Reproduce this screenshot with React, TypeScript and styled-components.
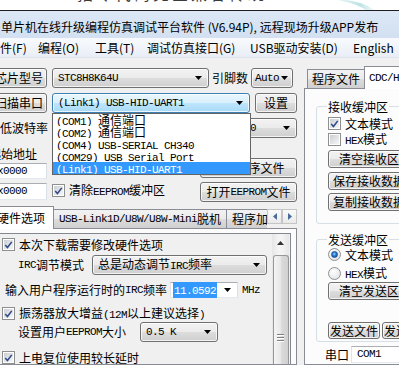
import React from "react";
import styled, { createGlobalStyle, css } from "styled-components";

const CJK = `"Noto Sans CJK SC", "Noto Sans", "Liberation Sans", sans-serif`;
const MONO = `"Liberation Mono", "DejaVu Sans Mono", monospace`;

const GlobalStyle = createGlobalStyle`
  html, body { margin: 0; padding: 0; overflow: hidden; background: #f0f0f0; }
  body { font-family: ${CJK}; font-size: 12px; color: #000; }
  * { box-sizing: border-box; }
`;

const Lat = styled.span`
  font-family: ${MONO};
  font-size: 11px;
  letter-spacing: -0.6px;
  white-space: pre;
`;

function mix(s: string) {
  return s
    .split(/([\x20-\x7e]+)/)
    .filter(Boolean)
    .map((p, i) =>
      /^[\x20-\x7e]+$/.test(p) ? <Lat key={i}>{p}</Lat> : <React.Fragment key={i}>{p}</React.Fragment>
    );
}

const Screen = styled.div`
  width: 399px;
  height: 365px;
  overflow: hidden;
  background: #f0f0f0;
  display: flex;
  flex-direction: column;
`;

const Slogan = styled.div`
  flex: none;
  height: 11px;
  background: #fff;
  border-bottom: 1px solid #1e1e1e;
  overflow: hidden;
  display: flex;
  align-items: flex-start;
`;

const SloganText = styled.div`
  margin-left: 77px;
  margin-top: -15px;
  font-size: 16px;
  line-height: 17px;
  color: #3a3a3a;
  letter-spacing: 3px;
  white-space: nowrap;
`;

const Swoosh = styled.svg`
  flex: none;
  margin-left: 22px;
`;

const TitleBar = styled.div`
  flex: none;
  height: 27px;
  background: linear-gradient(#dce8f6, #d2e0f1);
  display: flex;
  align-items: center;
  padding: 3px 0 0 1px;
  font-size: 12px;
  white-space: nowrap;
`;

const MenuBar = styled.div`
  flex: none;
  height: 20px;
  display: flex;
  align-items: center;
  background: linear-gradient(#f8fafd, #e9eef6);
  border-bottom: 1px solid #dfe4ec;
  white-space: nowrap;
`;

const MenuItem = styled.div<{ $w?: number; $ml?: number }>`
  flex: none;
  width: ${(p) => (p.$w ? `${p.$w}px` : "auto")};
  margin-left: ${(p) => p.$ml ?? 0}px;
  font-size: 12px;
  line-height: 18px;
`;

const Content = styled.div`
  flex: 1;
  min-height: 0;
  display: flex;
  padding-top: 10px;
`;

const LeftCol = styled.div`
  width: 297px;
  flex: none;
  display: flex;
  flex-direction: column;
`;

const RightCol = styled.div`
  flex: 1;
  min-width: 0;
  margin-left: 7px;
  margin-top: -2px;
  display: flex;
  flex-direction: column;
`;

const Row = styled.div<{ $mt?: number; $h?: number; $ml?: number }>`
  flex: none;
  display: flex;
  align-items: center;
  height: ${(p) => p.$h ?? 20}px;
  margin-top: ${(p) => p.$mt ?? 0}px;
  margin-left: ${(p) => p.$ml ?? 0}px;
  white-space: nowrap;
`;

const winBtn = css`
  border: 1px solid #707070;
  border-radius: 3px;
  background: linear-gradient(#f2f2f2 0%, #ebebeb 49%, #dddddd 50%, #cfcfcf 100%);
  box-shadow: inset 0 0 0 1px rgba(255, 255, 255, 0.75);
`;

const Btn = styled.div<{ $w: number; $h?: number; $ml?: number; $mt?: number }>`
  ${winBtn}
  flex: none;
  width: ${(p) => p.$w}px;
  height: ${(p) => p.$h ?? 20}px;
  margin-left: ${(p) => p.$ml ?? 0}px;
  margin-top: ${(p) => p.$mt ?? 0}px;
  display: flex;
  align-items: center;
  justify-content: center;
  white-space: nowrap;
  line-height: 1;
  overflow: hidden;
`;

const Label = styled.div<{ $ml?: number; $mt?: number; $h?: number }>`
  flex: none;
  margin-left: ${(p) => p.$ml ?? 0}px;
  margin-top: ${(p) => p.$mt ?? 0}px;
  height: ${(p) => (p.$h ? `${p.$h}px` : "auto")};
  display: flex;
  align-items: center;
  white-space: nowrap;
  line-height: 1;
`;

const ComboBox = styled.div<{
  $w: number;
  $h?: number;
  $ml?: number;
  $hot?: boolean;
  $flat?: boolean;
  $pr?: number;
  $pl?: number;
}>`
  ${winBtn}
  ${(p) =>
    p.$hot &&
    css`
      border-color: #3c7fb1;
      background: linear-gradient(#eaf6fd 0%, #d9f0fc 49%, #bee6fd 50%, #a7d9f5 100%);
    `}
  ${(p) =>
    p.$flat &&
    css`
      border-radius: 0;
      border-color: #abadb3 #dbdfe6 #e3e9ef #e2e3ea;
      background: #fff;
      box-shadow: none;
    `}
  position: relative;
  flex: none;
  width: ${(p) => p.$w}px;
  height: ${(p) => p.$h ?? 20}px;
  margin-left: ${(p) => p.$ml ?? 0}px;
  display: flex;
  align-items: center;
  justify-content: space-between;
  padding: 0 ${(p) => p.$pr ?? 6}px 0 ${(p) => p.$pl ?? 5}px;
  white-space: nowrap;
  line-height: 1;
`;

const ArrowSvg = styled.svg`
  flex: none;
`;

const Arrow = () => (
  <ArrowSvg width="7" height="4" viewBox="0 0 7 4">
    <path d="M0 0h7L3.5 4z" fill="#000" />
  </ArrowSvg>
);

const DropList = styled.div`
  position: absolute;
  left: -1px;
  top: 19px;
  width: 199px;
  border: 1px solid #646464;
  background: #fff;
  z-index: 10;
  padding: 0;
`;

const DropItem = styled.div<{ $sel?: boolean }>`
  height: 12px;
  line-height: 12px;
  padding-left: 3px;
  white-space: pre;
  color: #000;
  overflow: hidden;
  ${(p) =>
    p.$sel &&
    css`
      background: #3399ff;
      color: #fff;
    `}
`;

const TextInput = styled.div<{ $h: number; $mt: number }>`
  flex: none;
  height: ${(p) => p.$h}px;
  margin-top: ${(p) => p.$mt}px;
  width: 60px;
  background: #fff;
  border: 1px solid;
  border-color: #abadb3 #dbdfe6 #e3e9ef #e2e3ea;
  padding-left: 3px;
  display: flex;
  align-items: center;
  line-height: 1;
`;

const AddrBlock = styled.div`
  flex: none;
  display: flex;
  margin-top: 5px;
`;

const AddrStack = styled.div`
  flex: none;
  width: 60px;
  margin-left: -13px;
  display: flex;
  flex-direction: column;
`;

const MidCol = styled.div`
  flex: 1;
  display: flex;
  flex-direction: column;
  padding-left: 5px;
  padding-top: 41px;
`;

const BtnStack = styled.div`
  flex: none;
  width: 97px;
  display: flex;
  flex-direction: column;
`;

const CheckRow = styled.div<{ $mt?: number; $ml?: number; $h?: number }>`
  flex: none;
  display: flex;
  align-items: center;
  gap: 4px;
  height: ${(p) => p.$h ?? 13}px;
  margin-top: ${(p) => p.$mt ?? 0}px;
  margin-left: ${(p) => p.$ml ?? 0}px;
  white-space: nowrap;
  line-height: 1;
`;

const BoxMark = styled.span`
  flex: none;
  width: 13px;
  height: 13px;
  border: 1px solid #8e8f8f;
  background: #fff;
  display: flex;
  align-items: center;
  justify-content: center;
  padding: 1px;
`;

const BoxInner = styled.span`
  width: 9px;
  height: 9px;
  background: linear-gradient(135deg, #cbcfd5, #f6f6f6);
  display: flex;
  align-items: center;
  justify-content: center;
  overflow: visible;
`;

const RadioMark = styled.span`
  flex: none;
  width: 13px;
  height: 13px;
  border-radius: 50%;
  border: 1px solid #8e8f8f;
  background: radial-gradient(circle at 40% 35%, #ffffff, #dadde2);
  display: flex;
  align-items: center;
  justify-content: center;
`;

const RadioDot = styled.span`
  width: 7px;
  height: 7px;
  border-radius: 50%;
  background: radial-gradient(circle at 45% 40%, #8fd3ff 0%, #2a7bd4 45%, #0d3f8c 100%);
  border: 1px solid #1f4f8f;
`;

function Check({ on, children, mt, ml }: { on?: boolean; children: React.ReactNode; mt?: number; ml?: number }) {
  return (
    <CheckRow $mt={mt} $ml={ml}>
      <BoxMark>
        <BoxInner>
          {on && (
            <svg width="11" height="10" viewBox="0 0 11 10">
              <path d="M1.5 5 L4.2 8 L9.5 1.2" stroke="#2f4a86" strokeWidth="1.9" fill="none" />
            </svg>
          )}
        </BoxInner>
      </BoxMark>
      <span>{children}</span>
    </CheckRow>
  );
}

function Radio({ on, children, mt }: { on?: boolean; children: React.ReactNode; mt?: number }) {
  return (
    <CheckRow $mt={mt}>
      <RadioMark>{on && <RadioDot />}</RadioMark>
      <span>{children}</span>
    </CheckRow>
  );
}

const TabStrip = styled.div<{ $ml?: number; $pl?: number; $mt?: number }>`
  flex: none;
  height: 23px;
  margin-left: ${(p) => p.$ml ?? 0}px;
  margin-top: ${(p) => p.$mt ?? 0}px;
  padding-left: ${(p) => p.$pl ?? 0}px;
  display: flex;
  align-items: flex-end;
  box-shadow: inset 0 -1px 0 #898c95;
  overflow: hidden;
`;

const TabsWrap = styled.div`
  flex: 1;
  min-width: 0;
  height: 100%;
  display: flex;
  align-items: flex-end;
  overflow: hidden;
`;

const Tab = styled.div<{ $active?: boolean; $pl?: number; $pr?: number }>`
  flex: none;
  height: ${(p) => (p.$active ? 23 : 20)}px;
  border: 1px solid #898c95;
  border-bottom: ${(p) => (p.$active ? "none" : "1px solid #898c95")};
  margin-right: -1px;
  padding: 0 ${(p) => p.$pr ?? 5}px 0 ${(p) => p.$pl ?? 5}px;
  display: flex;
  align-items: center;
  white-space: nowrap;
  line-height: 1;
  position: relative;
  background: ${(p) => (p.$active ? "#ffffff" : "linear-gradient(#f2f2f2 0%, #ebebeb 49%, #dddddd 50%, #cfcfcf 100%)")};
  z-index: ${(p) => (p.$active ? 2 : 1)};
`;

const TabArrows = styled.div`
  flex: none;
  display: flex;
  align-self: center;
  margin-bottom: 2px;
`;

const TabArrowBtn = styled.div`
  width: 15px;
  height: 15px;
  border: 1px solid #c5c5c5;
  background: linear-gradient(#fbfbfb, #e9e9e9);
  display: flex;
  align-items: center;
  justify-content: center;
`;

const TabPanel = styled.div<{ $ml?: number }>`
  flex: 1;
  min-height: 0;
  margin-left: ${(p) => p.$ml ?? 0}px;
  border: 1px solid #898c95;
  border-top: none;
  background: #fcfcfc;
  display: flex;
  flex-direction: column;
`;

const LeftPanel = styled(TabPanel)`
  padding: 4px 5px 0 4px;
`;

const InnerBox = styled.div`
  flex: 1;
  min-height: 0;
  border: 1px solid #828790;
  border-bottom: none;
  background: #f0f0f0;
  display: flex;
`;

const InnerContent = styled.div`
  flex: 1;
  min-width: 0;
  display: flex;
  flex-direction: column;
  padding-left: 6px;
  overflow: hidden;
`;

const VScroll = styled.div`
  width: 17px;
  flex: none;
  margin-right: 1px;
  display: flex;
  flex-direction: column;
  align-items: center;
  background: linear-gradient(90deg, #e6e6e6, #f4f4f4 40%, #f4f4f4 60%, #e6e6e6);
`;

const ScrollArrow = styled.div`
  width: 17px;
  height: 17px;
  flex: none;
  display: flex;
  align-items: center;
  justify-content: center;
`;

const Thumb = styled.div`
  margin-top: 4px;
  width: 16px;
  flex: 1;
  border: 1px solid #989898;
  border-bottom: none;
  border-radius: 3px 3px 0 0;
  background: linear-gradient(90deg, #f4f4f4, #e9e9e9 45%, #dadada 55%, #d0d0d0);
  display: flex;
  flex-direction: column;
  align-items: center;
  padding-top: 78px;
  gap: 2px;
`;

const GripLine = styled.span`
  width: 7px;
  height: 1px;
  background: #7f7f7f;
  box-shadow: 0 1px 0 #fff;
`;

const GroupBox = styled.div<{ $mt: number; $pb: number }>`
  flex: none;
  margin: ${(p) => p.$mt}px -20px 0 11px;
  border: 1px solid #d5dfe5;
  border-radius: 3px;
  padding: 0 0 ${(p) => p.$pb}px 11px;
  display: flex;
  flex-direction: column;
`;

const Legend = styled.div`
  height: 14px;
  margin: -7px 0 0 -1px;
  align-self: flex-start;
  padding: 0 1px;
  background: #fcfcfc;
  display: flex;
  align-items: center;
  line-height: 1;
`;

const BtnRow = styled.div<{ $mt: number }>`
  flex: none;
  display: flex;
  gap: 2px;
  margin-top: ${(p) => p.$mt}px;
`;

const RightPanel = styled(TabPanel)`
  border-right: none;
`;

const SelText = styled.span`
  background: #3399ff;
  color: #fff;
  margin-left: -3px;
  padding: 1px 1px;
  line-height: 1;
`;

const menus: [string, number, number?][] = [
  ["文件(F)", 50, -12],
  ["编程(O)", 57],
  ["工具(T)", 52],
  ["调试仿真接口(G)", 103],
  ["USB驱动安装(D)", 103],
  ["English", 50],
];

const ports = [
  ["(COM1) ", "通信端口"],
  ["(COM2) ", "通信端口"],
  ["(COM4) USB-SERIAL CH340", ""],
  ["(COM29) USB Serial Port", ""],
  ["(Link1) USB-HID-UART1", ""],
];

export default function App() {
  return (
    <>
      <GlobalStyle />
      <Screen>
        <Slogan>
          <SloganText>指令代码完全兼容传统8051</SloganText>
          <Swoosh width="40" height="11" viewBox="0 0 40 11">
            <defs>
              <linearGradient id="sw" x1="0" x2="1">
                <stop offset="0" stopColor="#e8f6f6" />
                <stop offset="0.6" stopColor="#bfe3e6" />
                <stop offset="1" stopColor="#f4fbfb" />
              </linearGradient>
            </defs>
            <path d="M0 0 C12 2 24 6 30 11 L38 11 C32 5 20 1 8 0 Z" fill="url(#sw)" />
          </Swoosh>
        </Slogan>
        <TitleBar>单片机在线升级编程仿真调试平台软件 (V6.94P), 远程现场升级APP发布</TitleBar>
        <MenuBar>
          {menus.map(([m, w, ml]) => (
            <MenuItem key={m} $w={w} $ml={ml}>
              {m}
            </MenuItem>
          ))}
        </MenuBar>
        <Content>
          <LeftCol>
            <Row>
              <Btn $w={56} $ml={-9}>芯片型号</Btn>
              <ComboBox $w={157} $ml={5}>
                <Lat>STC8H8K64U</Lat>
                <Arrow />
              </ComboBox>
              <Label $ml={3}>引脚数</Label>
              <ComboBox $w={42} $ml={3} $pl={3} $pr={4}>
                <Lat>Auto</Lat>
                <Arrow />
              </ComboBox>
            </Row>
            <Row $mt={5}>
              <Btn $w={56} $ml={-9}>扫描串口</Btn>
              <ComboBox $w={198} $ml={5} $hot>
                <Lat>(Link1) USB-HID-UART1</Lat>
                <Arrow />
                <DropList>
                  {ports.map(([a, b], i) => (
                    <DropItem key={a} $sel={i === ports.length - 1}>
                      <Lat>{a}</Lat>
                      {b}
                    </DropItem>
                  ))}
                </DropList>
              </ComboBox>
              <Btn $w={42} $ml={5}>设置</Btn>
            </Row>
            <Row $mt={5}>
              <Label $ml={-12}>最低波特率</Label>
              <ComboBox $w={60} $ml={4}>
                <Lat>2400</Lat>
                <Arrow />
              </ComboBox>
              <Label $ml={28}>最高波特率</Label>
              <ComboBox $w={83} $ml={14}>
                <Lat>115200</Lat>
                <Arrow />
              </ComboBox>
            </Row>
            <AddrBlock>
              <AddrStack>
                <Label $ml={2} $mt={3} $h={16}>
                  起始地址
                </Label>
                <TextInput $h={16} $mt={1}>
                  <Lat>0x0000</Lat>
                </TextInput>
                <TextInput $h={17} $mt={4}>
                  <Lat>0x0000</Lat>
                </TextInput>
              </AddrStack>
              <MidCol>
                <Check on>{mix("清除EEPROM缓冲区")}</Check>
              </MidCol>
              <BtnStack>
                <Btn $w={97} $mt={15}>
                  打开程序文件
                </Btn>
                <Btn $w={97} $mt={4}>
                  {mix("打开EEPROM文件")}
                </Btn>
              </BtnStack>
            </AddrBlock>
            <TabStrip $ml={-10} $mt={4}>
              <TabsWrap>
                <Tab $active $pl={6} $pr={8}>
                  硬件选项
                </Tab>
                <Tab>{mix("USB-Link1D/U8W/U8W-Mini脱机")}</Tab>
                <Tab>程序加密后传输</Tab>
              </TabsWrap>
              <TabArrows>
                <TabArrowBtn>
                  <svg width="4" height="7" viewBox="0 0 4 7">
                    <path d="M4 0v7L0 3.5z" fill="#4a6a9a" />
                  </svg>
                </TabArrowBtn>
                <TabArrowBtn>
                  <svg width="4" height="7" viewBox="0 0 4 7">
                    <path d="M0 0v7L4 3.5z" fill="#4a6a9a" />
                  </svg>
                </TabArrowBtn>
              </TabArrows>
            </TabStrip>
            <LeftPanel $ml={-10}>
              <InnerBox>
                <InnerContent>
                  <Check on mt={4}>
                    本次下载需要修改硬件选项
                  </Check>
                  <Row $mt={4} $ml={16}>
                    <Label>{mix("IRC调节模式")}</Label>
                    <ComboBox $w={175} $ml={8}>
                      <span>{mix("总是动态调节IRC频率")}</span>
                      <Arrow />
                    </ComboBox>
                  </Row>
                  <Row $mt={7} $h={16} $ml={3}>
                    <Label>{mix("输入用户程序运行时的IRC频率")}</Label>
                    <ComboBox $w={68} $h={16} $ml={3} $flat>
                      <SelText>
                        <Lat>11.0592</Lat>
                      </SelText>
                      <Arrow />
                    </ComboBox>
                    <Label $ml={4}>
                      <Lat>MHz</Lat>
                    </Label>
                  </Row>
                  <Check on mt={9}>
                    {mix("振荡器放大增益(12M以上建议选择)")}
                  </Check>
                  <Row $mt={2} $ml={16}>
                    <Label>{mix("设置用户EEPROM大小")}</Label>
                    <ComboBox $w={78} $ml={14}>
                      <Lat>0.5 K</Lat>
                      <Arrow />
                    </ComboBox>
                  </Row>
                  <Check on mt={9}>
                    上电复位使用较长延时
                  </Check>
                </InnerContent>
                <VScroll>
                  <ScrollArrow>
                    <svg width="7" height="4" viewBox="0 0 7 4">
                      <path d="M0 4h7L3.5 0z" fill="#333" />
                    </svg>
                  </ScrollArrow>
                  <Thumb>
                    <GripLine />
                    <GripLine />
                    <GripLine />
                  </Thumb>
                </VScroll>
              </InnerBox>
            </LeftPanel>
          </LeftCol>
          <RightCol>
            <TabStrip $pl={3}>
              <TabsWrap>
                <Tab $pl={4} $pr={4}>
                  程序文件
                </Tab>
                <Tab $active $pl={4}>
                  {mix("CDC/HID模式")}
                </Tab>
              </TabsWrap>
            </TabStrip>
            <RightPanel>
              <GroupBox $mt={17} $pb={12}>
                <Legend>接收缓冲区</Legend>
                <Check on mt={3}>
                  文本模式
                </Check>
                <Check mt={3}>{mix("HEX模式")}</Check>
                <Btn $w={82} $h={18} $mt={4}>
                  清空接收区
                </Btn>
                <Btn $w={82} $h={18} $mt={4}>
                  保存接收数据
                </Btn>
                <Btn $w={82} $h={18} $mt={3}>
                  复制接收数据
                </Btn>
              </GroupBox>
              <GroupBox $mt={15} $pb={2}>
                <Legend>发送缓冲区</Legend>
                <Radio on mt={1}>
                  文本模式
                </Radio>
                <Radio mt={6}>{mix("HEX模式")}</Radio>
                <Btn $w={82} $h={18} $mt={2}>
                  清空发送区
                </Btn>
                <BtnRow $mt={22}>
                  <Btn $w={52} $h={17}>
                    发送文件
                  </Btn>
                  <Btn $w={52} $h={17}>
                    发送回车
                  </Btn>
                </BtnRow>
              </GroupBox>
              <Row $mt={4} $h={17} $ml={20}>
                <Label>串口</Label>
                <ComboBox $w={70} $h={17} $ml={2} $flat>
                  <Lat>COM1</Lat>
                </ComboBox>
              </Row>
            </RightPanel>
          </RightCol>
        </Content>
      </Screen>
    </>
  );
}
